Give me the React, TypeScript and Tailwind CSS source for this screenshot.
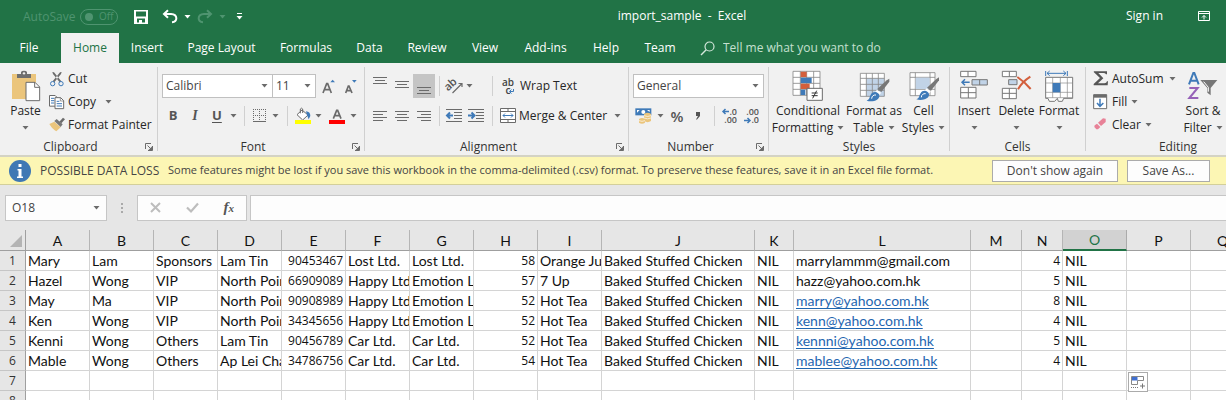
import React from "react";

const INK = "#6b6b6b";
const BLUE = "#3f7ab8";

type DrawProps = { vb: string; className: string; children: React.ReactNode };
const Draw = ({ vb, className, children }: DrawProps) => (
  <svg viewBox={vb} className={"shrink-0 overflow-visible " + className} fill="none" aria-hidden="true">
    {children}
  </svg>
);

const Caret = ({ className = "text-[#6b6b6b]" }: { className?: string }) => (
  <svg viewBox="0 0 7 4" className={"h-1 w-[7px] shrink-0 " + className} aria-hidden="true">
    <path d="M.5 0h6L3.500 3.500z" fill="currentColor" />
  </svg>
);

const Launcher = () => (
  <button aria-label="More options" className="flex h-4 w-4 items-center justify-end pr-1">
    <Draw vb="0 0 8 8" className="h-2 w-2">
      <path d="M.5 6V.5H6" stroke={INK} />
      <path d="M2.500 2.500L6 6" stroke={INK} />
      <path d="M7.500 3v4.500H3" stroke={INK} />
      <path d="M7 3.500V7H3.500z" fill={INK} />
    </Draw>
  </button>
);

type GroupProps = { label: string; className: string; launcher?: boolean; children: React.ReactNode };
const Group = ({ label, className, launcher, children }: GroupProps) => (
  <section aria-label={label} className={"flex shrink-0 flex-col pt-1 " + className}>
    <div className="flex h-[72px]">{children}</div>
    <div className="flex h-4 items-center">
      <span className="flex-1 text-center leading-4 text-[#333]">{label}</span>
      {launcher && <Launcher />}
    </div>
  </section>
);

const Divider = () => <span className="my-1 w-px shrink-0 bg-[#d0d0d0]" />;
const Bar = ({ className = "" }: { className?: string }) => <span className={"h-5 w-px shrink-0 bg-[#d0d0d0] " + className} />;

type IconButtonProps = { label: string; className: string; children: React.ReactNode };
const IconButton = ({ label, className, children }: IconButtonProps) => (
  <button aria-label={label} className={"flex h-6 shrink-0 items-center " + className}>
    {children}
  </button>
);

type BigProps = { icon: React.ReactNode; first: string; second?: string; className: string };
const BigButton = ({ icon, first, second, className }: BigProps) => (
  <button className={"flex shrink-0 flex-col items-center gap-px pt-[3px] leading-4 " + className}>
    <span className="flex h-8 items-center">{icon}</span>
    <span className="whitespace-nowrap">{first}</span>
    <span className="flex h-4 items-center gap-1 whitespace-nowrap">
      {second}
      <Caret />
    </span>
  </button>
);

const PasteIcon = () => (
  <Draw vb="36 24 90 96" className="h-8 w-[30px]">
    <rect x="39" y="36" width="72" height="75" fill="#ebc57c" />
    <path d="M54 48V36h12v-6q2-4 9-4t9 4v6h12v12z" fill="#6f6f6f" />
    <circle cx="75" cy="34" r="3.500" fill="#f1f1f1" />
    <path d="M81 61h27l14 14v41H81z" fill="#fff" stroke={INK} strokeWidth="3" />
    <path d="M107 61v15h15" stroke={INK} strokeWidth="3" />
  </Draw>
);
const CutIcon = () => (
  <Draw vb="147 21 48 48" className="h-4 w-4">
    <path d="M157 24l5 1 22 27-5 3-20-25zM185 24l-5 1-22 27 5 3 20-25z" fill={INK} />
    <circle cx="158" cy="59" r="6.500" stroke={BLUE} strokeWidth="3" />
    <circle cx="183" cy="59" r="6.500" stroke={BLUE} strokeWidth="3" />
  </Draw>
);
const CopyIcon = () => (
  <Draw vb="147 90 48 48" className="h-4 w-4">
    <path d="M148.500 94.500h17l6 6v26h-23z" fill="#fff" stroke={INK} strokeWidth="3" />
    <path d="M153 103h10M153 110h10M153 117h10" stroke={BLUE} strokeWidth="3" />
    <path d="M165 101h17l9 9v24h-26z" fill="#fff" stroke={INK} strokeWidth="3" />
    <path d="M181 101v10h10" stroke={INK} strokeWidth="2" />
    <path d="M170 112h8M170 119h16M170 126h16" stroke={BLUE} strokeWidth="3" />
  </Draw>
);
const PainterIcon = () => (
  <Draw vb="147 160 48 48" className="h-4 w-4">
    <path d="M148 181l15-7 19 17-13 12q-12-6-21-22z" fill="#ebc57c" />
    <path d="M163 172l7-6 18 16-6 8z" fill="#777" />
    <path d="M178 174l11-12 6 5-11 12z" fill={INK} />
  </Draw>
);

const Brush = ({ x, y }: { x: number; y: number }) => (
  <g transform={`translate(${x} ${y})`}>
    <path d="M68 0v9L44 40l-12-9L60 5z" fill="#777" />
    <path d="M31 33l12 9-4 6-13-9z" fill="#fff" />
    <path d="M0 66c10-3 8-12 13-19 4-7 14-9 20-4 8 5 6 15-2 20-8 5-20 6-31 3z" fill={BLUE} />
    <path d="M15 60c0-8 6-12 13-11" stroke="#fff" strokeWidth="3" />
  </g>
);

const ConditionalIcon = () => (
  <Draw vb="163 24 96 96" className="h-8 w-8">
    <path d="M166 28h81v72h-81z" fill="#fff" />
    <path d="M166 28h81v72h-81zM166 46h81M166 64h81M166 82h81M188 28v72M207 28v72M228 28v72" stroke="#888" strokeWidth="2.500" />
    <path d="M189 29h18v16h-18zM189 65h27v16h-27z" fill="#d35f3c" />
    <path d="M189 47h33v16h-33zM189 83h14v16h-14z" fill={BLUE} />
    <path d="M208 79h46v36h-46z" fill="#fff" stroke={INK} strokeWidth="3" />
    <path d="M222 93h18M222 101h18M237 86l-12 23" stroke="#333" strokeWidth="3" />
  </Draw>
);
const TableIcon = () => (
  <Draw vb="354 24 96 96" className="h-8 w-8">
    <path d="M361 34h72v69h-72z" fill="#fff" />
    <path d="M379 49h54v54h-54z" fill="#c1d3e7" />
    <path d="M361 34h72v69h-72zM361 49h72M361 67h72M361 85h72M379 34v69M397 34v69M415 34v69" stroke="#888" strokeWidth="2.500" />
    <Brush x={380} y={50} />
  </Draw>
);
const CellStylesIcon = () => (
  <Draw vb="505 21 96 96" className="h-8 w-8">
    <path d="M511 29h75v69h-75z" fill="#fff" />
    <path d="M511 29h75v69h-75zM511 43h75M511 79h75M527 29v69M571 29v69" stroke="#888" strokeWidth="2.500" />
    <path d="M528 44h42v34h-42z" fill="#c1d3e7" />
    <Brush x={530} y={43} />
  </Draw>
);
const InsertIcon = () => (
  <Draw vb="0 0 96 96" className="h-8 w-8">
    <path d="M8 4h46v16H8zM30 4v16M8 52h46v32H8zM31 52v32M8 68h46" fill="#fff" stroke="#777" strokeWidth="3" />
    <path d="M42 29h46v16H42zM65 29v16" fill="#c1d3e7" stroke="#777" strokeWidth="3" />
    <path d="M35 37H13M21 28l-9 9 9 9" stroke={BLUE} strokeWidth="4.500" />
  </Draw>
);
const DeleteIcon = () => (
  <Draw vb="66 24 96 96" className="h-8 w-8">
    <path d="M70 28h42v16H70zM91 28v16M70 79h42v31H70zM91 79v31M70 94h42" fill="#fff" stroke="#777" strokeWidth="3" />
    <path d="M89 53h25v15H89z" fill="#c1d3e7" stroke="#777" strokeWidth="3" />
    <path d="M115 45q20 13 40 36M154 44q-25 16-37 38" stroke="#d35f3c" strokeWidth="6" />
  </Draw>
);
const FormatIcon = () => (
  <Draw vb="189 21 96 96" className="h-8 w-8">
    <path d="M197 24v15M262 24v15M201 31h57M209 24l-8 7 8 7M250 24l8 7-8 7" stroke={BLUE} strokeWidth="3" />
    <path d="M197 43h81v63h-27l-4 9h-12l-3-9-8 9h-16l-4-9h-7z" fill="#fff" stroke="#777" strokeWidth="3" />
    <path d="M197 60h81M197 88h81M197 104h81M218 43v61M241 43v61M262 43v61" stroke="#888" strokeWidth="2" />
    <path d="M218 60h23v28h-23z" fill={BLUE} />
  </Draw>
);
const SortIcon = () => (
  <Draw vb="624 24 90 90" className="h-[30px] w-[30px]">
    <path d="M627 64l13-34h3l13 34M632 53h19" stroke={BLUE} strokeWidth="6" />
    <path d="M628 75h25l-25 30h27" stroke="#9661b8" strokeWidth="6" />
    <path d="M661 51h51l-20 24v22l-10-8V75z" fill="#777" />
    <path d="M671 56l14 17v13" stroke="#fff" strokeWidth="3" />
  </Draw>
);

type Align = "left" | "center" | "right";
const Lines = ({ widths, align }: { widths: number[]; align: Align }) => (
  <Draw vb="0 0 14 12" className="h-3 w-3.5">
    {widths.map((w, i) => {
      const x = align === "left" ? 0 : align === "right" ? 14 - w : (14 - w) / 2;
      return <rect key={i} x={x} y={i * 3 + 1} width={w} height="1" fill={INK} />;
    })}
  </Draw>
);

const Indent = ({ flip }: { flip?: boolean }) => (
  <Draw vb="0 0 16 14" className="h-3.5 w-4">
    <path d="M0 .5h16M8 3.500h8M8 6.500h8M8 9.500h8M0 12.500h16" stroke={INK} />
    {flip ? <path d="M0 6.500h6M3.500 3.500l3 3-3 3" stroke={BLUE} strokeWidth="2" /> : <path d="M7 6.500H1M4 3.500l-3 3 3 3" stroke={BLUE} strokeWidth="2" />}
  </Draw>
);

const DecimalIcon = ({ less }: { less?: boolean }) => (
  <span className="relative flex w-[15px] flex-col items-end text-[9px] leading-[8px] font-semibold">
    <span>{less ? ".00" : ".0"}</span>
    <span>{less ? ".0" : ".00"}</span>
    <Draw vb="0 0 7 5" className={less ? "absolute bottom-px left-0 h-[5px] w-[7px]" : "absolute top-px left-0 h-[5px] w-[7px]"}>
      {less ? <path d="M0 2.500h6M3.500 0L6 2.500 3.500 5" stroke={BLUE} strokeWidth="1.500" /> : <path d="M7 2.500H1M3.500 0L1 2.500 3.500 5" stroke={BLUE} strokeWidth="1.500" />}
    </Draw>
  </span>
);

type PickProps = { label: string; value: string; className: string };
const Pick = ({ label, value, className }: PickProps) => (
  <span className={"relative flex h-6 shrink-0 items-center border border-[#c0c0c0] bg-white " + className}>
    <select aria-label={label} defaultValue={value} className="h-full w-full appearance-none bg-transparent pl-[3px] text-[#444] outline-none">
      <option>{value}</option>
    </select>
    <Caret className="pointer-events-none absolute right-1 text-[#6b6b6b]" />
  </span>
);

const tabs: [string, string][] = [
  ["File", "w-[61px] pr-[3px]"],
  ["Home", "w-[58px] bg-[#f1f1f1] text-[#217346]"],
  ["Insert", "w-[56px]"],
  ["Page Layout", "w-[93px]"],
  ["Formulas", "w-[76px]"],
  ["Data", "w-[51px]"],
  ["Review", "w-[64px]"],
  ["View", "w-[52px]"],
  ["Add-ins", "w-[69px]"],
  ["Help", "w-[52px]"],
  ["Team", "w-[56px]"],
];

const columns: [string, string][] = [
  ["A", "w-16"], ["B", "w-16"], ["C", "w-16"], ["D", "w-16"], ["E", "w-16"], ["F", "w-16"], ["G", "w-16"], ["H", "w-16"], ["I", "w-16"],
  ["J", "w-[153px]"], ["K", "w-[39px]"], ["L", "w-[177px]"], ["M", "w-[51px]"], ["N", "w-[41px]"], ["O", "w-16"], ["P", "w-16"], ["Q", "w-16"],
];

const dish = "Baked Stuffed Chicken";
const rows: string[][] = [
  ["Mary", "Lam", "Sponsors", "Lam Tin", "90453467", "Lost Ltd.", "Lost Ltd.", "58", "Orange Juice", dish, "NIL", "marrylammm@gmail.com", "", "4", "NIL"],
  ["Hazel", "Wong", "VIP", "North Point", "66909089", "Happy Ltd.", "Emotion Ltd.", "57", "7 Up", dish, "NIL", "hazz@yahoo.com.hk", "", "5", "NIL"],
  ["May", "Ma", "VIP", "North Point", "90908989", "Happy Ltd.", "Emotion Ltd.", "52", "Hot Tea", dish, "NIL", "marry@yahoo.com.hk", "", "8", "NIL"],
  ["Ken", "Wong", "VIP", "North Point", "34345656", "Happy Ltd.", "Emotion Ltd.", "52", "Hot Tea", dish, "NIL", "kenn@yahoo.com.hk", "", "4", "NIL"],
  ["Kenni", "Wong", "Others", "Lam Tin", "90456789", "Car Ltd.", "Car Ltd.", "52", "Hot Tea", dish, "NIL", "kennni@yahoo.com.hk", "", "5", "NIL"],
  ["Mable", "Wong", "Others", "Ap Lei Chau", "34786756", "Car Ltd.", "Car Ltd.", "54", "Hot Tea", dish, "NIL", "mablee@yahoo.com.hk", "", "4", "NIL"],
  [],
  [],
];
const numeric = new Set(["E", "H", "N"]);

const TitleBar = () => (
  <header className="flex h-[33px] items-center text-white">
    <div className="flex w-[250px] shrink-0 items-center">
      <span className="w-20 shrink-0 pl-[23px] text-[#4f9470]">AutoSave</span>
      <button className="flex h-4 w-[38px] shrink-0 items-center gap-1.5 rounded-full border border-[#4f9470] pl-1 text-[10px] text-[#4f9470]">
        <span className="h-2 w-2 rounded-full bg-[#4f9470]" />
        Off
      </button>
      <button aria-label="Save" className="ml-4">
        <Draw vb="0 0 14 14" className="h-3.5 w-3.5">
          <path d="M0 0h14v14H0zM2 1.500V6.500h10V1.500zM3 8.500V12.500h2V10h3v2.500h3V8.500z" fill="#fff" fillRule="evenodd" />
        </Draw>
      </button>
      <button aria-label="Undo" className="ml-3.5 flex items-center gap-1.5">
        <Draw vb="486 24 48 48" className="h-4 w-4">
          <path d="M504 28l-12 11 12 11M493 39h20q16 1 16 13 0 11-13 12" stroke="#fff" strokeWidth="6" />
        </Draw>
        <Caret className="text-white" />
      </button>
      <button aria-label="Redo" className="ml-1.5 flex items-center gap-1.5">
        <Draw vb="591 24 48 48" className="h-4 w-4">
          <path d="M621 28l12 11-12 11M632 39h-20q-16 1-16 13 0 11 13 12" stroke="#4f9470" strokeWidth="6" />
        </Draw>
        <Caret className="text-[#4f9470]" />
      </button>
      <button aria-label="Customize toolbar" className="ml-2.5 flex flex-col items-center gap-0.5">
        <span className="h-px w-[5px] bg-white" />
        <Caret className="text-white" />
      </button>
    </div>
    <h1 className="flex-1 pb-0.5 text-center whitespace-pre">import_sample  -  Excel</h1>
    <div className="flex w-28 shrink-0 items-center justify-between pr-4 pb-0.5 pl-3">
      <button>Sign in</button>
      <button aria-label="Ribbon display options">
        <Draw vb="0 0 12 10" className="h-2.5 w-3">
          <path d="M.5.5h11v9H.5zM.5 2.500h11M6 8.500V4.500M4 6.500l2-2 2 2" stroke="#fff" />
        </Draw>
      </button>
    </div>
  </header>
);

const TabRow = () => (
  <nav className="flex h-[30px] text-white">
    {tabs.map(([name, cls]) => (
      <button key={name} className={"shrink-0 whitespace-nowrap " + cls}>
        {name}
      </button>
    ))}
    <label className="flex items-center gap-2 pl-3 text-[#c5e0d0]">
      <Draw vb="0 0 15 15" className="h-[15px] w-[15px]">
        <circle cx="9.500" cy="5.500" r="4.500" stroke="#d5e8dc" strokeWidth="1.200" />
        <path d="M6.200 8.800L1 14" stroke="#d5e8dc" strokeWidth="1.400" />
      </Draw>
      <input className="w-48 bg-transparent text-[#c5e0d0] outline-none placeholder:text-[#c5e0d0]" placeholder="Tell me what you want to do" />
    </label>
  </nav>
);

const Ribbon = () => (
  <div className="flex h-[92px] shrink-0 overflow-hidden bg-[#f1f1f1]">
    <Group label="Clipboard" launcher className="w-[157px]">
      <BigButton className="w-[49px] pl-0.5" icon={<PasteIcon />} first="Paste" />
      <div className="flex flex-col">
        <button className="flex h-[23px] items-center gap-[3px]"><CutIcon />Cut</button>
        <button className="flex h-[23px] items-center gap-[3px]"><CopyIcon />Copy<span className="pl-1.5"><Caret /></span></button>
        <button className="flex h-[23px] items-center gap-[3px] whitespace-nowrap"><PainterIcon />Format Painter</button>
      </div>
    </Group>
    <Divider />
    <Group label="Font" launcher className="w-[206px]">
      <div className="flex flex-col gap-1.5 pt-[7px] pl-1">
        <div className="flex items-center">
          <Pick label="Font" value="Calibri" className="w-[111px]" />
          <Pick label="Font size" value="11" className="-ml-px w-11" />
          <IconButton label="Increase font size" className="ml-1.5 w-[22px]">
            <Draw vb="246 42 42 48" className="h-4 w-3.5">
              <path d="M249 87l11-28h3l11 28M253 77h17" stroke={INK} strokeWidth="5" />
              <path d="M271 55l7-8 7 8z" fill={BLUE} />
            </Draw>
          </IconButton>
          <IconButton label="Decrease font size" className="w-[18px]">
            <Draw vb="313 42 42 48" className="h-4 w-3.5">
              <path d="M318 87l8-21h2l9 21M321 80h13" stroke={INK} strokeWidth="5" />
              <path d="M337 48h14l-7 8z" fill={BLUE} />
            </Draw>
          </IconButton>
        </div>
        <div className="flex items-center text-[13px] text-[#555]">
          <IconButton label="Bold" className="w-[22px] justify-center"><b>B</b></IconButton>
          <IconButton label="Italic" className="w-[22px] justify-center"><i className="font-['Liberation_Serif',serif] text-sm font-bold">I</i></IconButton>
          <IconButton label="Underline" className="w-[38px] justify-between pr-[7px] pl-1.5"><b className="underline underline-offset-2">U</b><Caret /></IconButton>
          <Bar />
          <IconButton label="Borders" className="w-[42px] justify-between px-2">
            <Draw vb="0 0 13 14" className="h-3.5 w-[13px]">
              <path d="M0 .5h13M0 6.500h13M.5 0v12M6.500 0v12M12.500 0v12" stroke={INK} strokeDasharray="1 1" />
              <path d="M0 12.500h13" stroke={INK} />
            </Draw>
            <Caret />
          </IconButton>
          <Bar />
          <IconButton label="Fill color" className="w-[38px] justify-between pr-1 pl-1.5">
            <Draw vb="163 135 51 54" className="h-[18px] w-[17px]">
              <path d="M172 158l15-14 18 15-16 15z" fill="#fff" stroke={INK} strokeWidth="3" />
              <path d="M182 154v-13q3-5 7 0v12" stroke={INK} strokeWidth="3" />
              <path d="M199 148q13 1 13 14l-5 10-5-13z" fill={BLUE} />
              <path d="M166 174h48v12h-48z" fill="#ff0" />
            </Draw>
            <Caret />
          </IconButton>
          <IconButton label="Font color" className="w-[31px] justify-between pl-[3px]">
            <Draw vb="267 135 48 54" className="h-[18px] w-4">
              <path d="M280 170l10-25h3l10 25M284 161h15" stroke={INK} strokeWidth="5" />
              <path d="M267 174h48v12h-48z" fill="#f00" />
            </Draw>
            <Caret />
          </IconButton>
        </div>
      </div>
    </Group>
    <Divider />
    <Group label="Alignment" launcher className="w-[263px]">
      <div className="flex flex-col gap-1.5 pt-[7px] pl-1">
        <div className="flex items-center">
          <IconButton label="Top align" className="w-[22px] items-start justify-center pt-0.5"><Lines widths={[14, 10, 14]} align="center" /></IconButton>
          <IconButton label="Middle align" className="w-[22px] justify-center"><Lines widths={[14, 10, 14]} align="center" /></IconButton>
          <IconButton label="Bottom align" className="w-[22px] items-end justify-center bg-[#c5c5c5]"><Lines widths={[14, 10, 14]} align="center" /></IconButton>
          <Bar className="ml-1" />
          <IconButton label="Orientation" className="w-[41px] justify-between pr-2 pl-1.5">
            <Draw vb="0 0 18 16" className="h-4 w-[18px]">
              <text x="-1" y="10" fill="#555" fontFamily="Open Sans, sans-serif" fontSize="11" fontWeight="600" transform="rotate(-42 5 8)">ab</text>
              <path d="M6.500 15L16 5.500M12.500 5.500H16V9" stroke={INK} strokeWidth="1.200" />
            </Draw>
            <Caret />
          </IconButton>
          <Bar className="mr-[9px] ml-[11px]" />
          <button className="flex h-6 items-center gap-1.5 whitespace-nowrap">
            <span className="relative flex w-3 flex-col text-[10px] leading-[8px] font-semibold text-[#444]">
              <span>ab</span>
              <span>c</span>
              <Draw vb="0 0 5 5" className="absolute right-0 bottom-0 h-[5px] w-[5px]">
                <path d="M4.500 0v2.500H1M2.500 .5l-2 2 2 2" stroke={BLUE} />
              </Draw>
            </span>
            Wrap Text
          </button>
        </div>
        <div className="flex items-center">
          <IconButton label="Align left" className="w-[22px] justify-center"><Lines widths={[14, 10, 14, 10]} align="left" /></IconButton>
          <IconButton label="Center" className="w-[22px] justify-center"><Lines widths={[14, 10, 14, 10]} align="center" /></IconButton>
          <IconButton label="Align right" className="w-[22px] justify-center"><Lines widths={[14, 10, 14, 10]} align="right" /></IconButton>
          <Bar className="ml-1" />
          <IconButton label="Decrease indent" className="w-[22px] justify-end"><Indent /></IconButton>
          <IconButton label="Increase indent" className="w-[22px] justify-end"><Indent flip /></IconButton>
          <Bar className="mr-[7px] ml-2" />
          <button className="flex h-6 items-center gap-[3px] whitespace-nowrap">
            <Draw vb="0 0 16 16" className="h-4 w-4">
              <path d="M.5.5h15v14H.5zM.5 3.500h15M.5 11.500h15M8 0v3.500M8 11.500V15" fill="#fff" stroke={INK} />
              <path d="M3 7.500h10M5 5.500l-2 2 2 2M11 5.500l2 2-2 2" stroke={BLUE} />
            </Draw>
            Merge &amp; Center
            <span className="pl-1"><Caret /></span>
          </button>
        </div>
      </div>
    </Group>
    <Divider />
    <Group label="Number" launcher className="w-[139px]">
      <div className="flex flex-col gap-1.5 pt-[7px] pl-1">
        <Pick label="Number format" value="General" className="w-[131px]" />
        <div className="flex items-center text-[#555]">
          <IconButton label="Accounting format" className="w-[33px] justify-between pr-0.5 pl-0.5">
            <Draw vb="437 135 51 54" className="h-[18px] w-[17px]">
              <path d="M438 139h48v21h-48z" fill={BLUE} />
              <path d="M443 144h8l-8 8zM481 144h-8l8 6z" fill="#fff" />
              <circle cx="462" cy="150" r="6" fill="#fff" />
              <path d="M464 156q11-7 21 0v21q-10 7-21 0z" fill="#ebc57c" />
              <path d="M449 171q9-6 18 0v11q-9 6-18 0z" fill="#ebc57c" />
              <path d="M464 161q11 5 21 0M464 168q11 5 21 0M449 176q9 4 18 0" stroke="#fff" strokeWidth="2" />
            </Draw>
            <Caret />
          </IconButton>
          <IconButton label="Percent" className="w-[22px] justify-center text-[15px] font-semibold">%</IconButton>
          <IconButton label="Comma style" className="w-5 justify-center">
            <Draw vb="0 0 6 8" className="h-2 w-1.5"><path d="M1 0h4v4L2 7.500H1L3 4H1z" fill="#555" /></Draw>
          </IconButton>
          <Bar className="ml-1.5" />
          <IconButton label="Increase decimal" className="w-[22px] justify-end"><DecimalIcon /></IconButton>
          <IconButton label="Decrease decimal" className="w-[22px] justify-end"><DecimalIcon less /></IconButton>
        </div>
      </div>
    </Group>
    <Divider />
    <Group label="Styles" className="w-[180px]">
      <BigButton className="w-[78px]" icon={<ConditionalIcon />} first="Conditional" second="Formatting" />
      <BigButton className="w-[54px]" icon={<TableIcon />} first="Format as" second="Table" />
      <BigButton className="w-[45px]" icon={<CellStylesIcon />} first="Cell" second="Styles" />
    </Group>
    <Divider />
    <Group label="Cells" className="w-[135px]">
      <BigButton className="ml-1 w-10" icon={<InsertIcon />} first="Insert" />
      <BigButton className="w-[45px]" icon={<DeleteIcon />} first="Delete" />
      <BigButton className="w-10" icon={<FormatIcon />} first="Format" />
    </Group>
    <Divider />
    <Group label="Editing" className="w-[184px]">
      <div className="flex w-[93px] shrink-0 flex-col pl-[7px]">
        <button className="flex h-[23px] items-center gap-[3px] whitespace-nowrap">
          <Draw vb="339 24 48 45" className="h-[15px] w-4"><path d="M342 25h39v9h-3q-2-4-8-4h-15l15 16-16 15h19q7 0 8-6h3l-1 12h-42v-4l19-18-19-18z" fill="#555" /></Draw>
          AutoSum<span className="pl-0.5"><Caret /></span>
        </button>
        <button className="flex h-[23px] items-center gap-1">
          <Draw vb="341 90 45 48" className="h-4 w-[15px]">
            <path d="M343 92h39v42h-39z" fill="#fff" stroke={INK} strokeWidth="3" />
            <path d="M343 92h39v9h-39z" fill={INK} />
            <path d="M362 104v22M353 117l9 10 10-10" stroke={BLUE} strokeWidth="4.500" />
          </Draw>
          Fill<Caret />
        </button>
        <button className="flex h-[23px] items-center gap-1">
          <Draw vb="341 159 45 48" className="h-4 w-[15px]">
            <path d="M356 176l15-13 8 1v10l-14 12z" fill="#e88298" />
            <path d="M353 179l10 10-7 7h-5l-6-7 1-5z" fill="#e88298" />
          </Draw>
          Clear<Caret />
        </button>
      </div>
      <BigButton className="w-12" icon={<SortIcon />} first="Sort &amp;" second="Filter" />
    </Group>
  </div>
);

const MessageBar = () => (
  <div role="status" className="flex h-[30px] shrink-0 items-center border-t-2 border-b border-t-[#d4d3c4] border-b-[#d3cf9a] bg-[#fcf6b4] pl-[9px] text-[#444]">
    <Draw vb="0 0 22 22" className="h-[22px] w-[22px]">
      <circle cx="11" cy="11" r="11" fill="#3f78b4" />
      <path d="M9.500 4h3v3h-3zM8.500 9h4v7.500h1.500V18h-6v-1.500h1.500v-6H8.500z" fill="#fff" />
    </Draw>
    <span className="ml-[9px] w-32 shrink-0 whitespace-nowrap">POSSIBLE DATA LOSS</span>
    <span className="min-w-0 flex-1 text-[11px] whitespace-nowrap">
      Some features might be lost if you save this workbook in the comma-delimited (.csv) format. To preserve these features, save it in an Excel file format.
    </span>
    <button className="h-[22px] w-[126px] shrink-0 border border-[#ababab] bg-[#fdfdfd]">Don't show again</button>
    <button className="mr-4 ml-[9px] h-[22px] w-[83px] shrink-0 border border-[#ababab] bg-[#fdfdfd]">Save As...</button>
  </div>
);

const FormulaBar = () => (
  <div className="flex h-[45px] shrink-0 items-center bg-[#e6e6e6] pl-[5px]">
    <label className="flex h-[26px] w-[102px] shrink-0 items-center border border-[#c6c6c6] bg-[#fdfdfd] pr-1.5 pl-1.5">
      <input aria-label="Name box" defaultValue="O18" className="min-w-0 flex-1 bg-transparent text-[#444] outline-none" />
      <Caret />
    </label>
    <Draw vb="0 0 2 10" className="mx-3.5 h-2.5 w-0.5">
      <path d="M0 0h2v2H0zM0 4h2v2H0zM0 8h2v2H0z" fill="#aaa" />
    </Draw>
    <div className="flex h-[26px] w-[110px] shrink-0 items-center justify-between border border-[#c6c6c6] bg-[#fdfdfd] px-3">
      <button aria-label="Cancel"><Draw vb="0 0 11 11" className="h-[11px] w-[11px]"><path d="M1 1l9 9M10 1l-9 9" stroke="#bdbdbd" strokeWidth="2" /></Draw></button>
      <button aria-label="Enter"><Draw vb="0 0 13 11" className="h-[11px] w-[13px]"><path d="M1 5.500L5 9.500 12 1.500" stroke="#bdbdbd" strokeWidth="2.200" /></Draw></button>
      <button className="font-['Liberation_Serif',serif] text-[15px] leading-4 font-bold text-[#555] italic">f<span className="text-[11px]">x</span></button>
    </div>
    <input aria-label="Formula" className="ml-[3px] h-[26px] min-w-0 flex-1 border border-r-0 border-[#c6c6c6] bg-[#fdfdfd] outline-none" />
  </div>
);

const Sheet = () => (
  <main className="min-h-0 flex-1 overflow-hidden bg-white">
    <table className="w-[1255px] table-fixed border-separate border-spacing-0 font-[Lato,sans-serif] text-[14px] leading-[19px] text-[#111]">
      <colgroup>
        <col className="w-[26px]" />
        {columns.map(([name, w]) => <col key={name} className={w} />)}
      </colgroup>
      <thead>
        <tr className="h-[21px] bg-[#e6e6e6]">
          <th aria-label="Select all" className="border-r border-b border-[#9f9f9f] p-0">
            <Draw vb="0 0 25 20" className="h-5 w-[25px]"><path d="M22 5v12H10z" fill="#b4b4b4" /></Draw>
          </th>
          {columns.map(([name]) => (
            <th
              key={name}
              scope="col"
              className={
                name === "O"
                  ? "border-r border-b-2 border-r-[#ababab] border-b-[#217346] bg-[#d2d2d2] p-0 font-normal text-[#217346]"
                  : "border-r border-b border-r-[#b5b5b5] border-b-[#9f9f9f] p-0 font-normal"
              }
            >
              {name}
            </th>
          ))}
        </tr>
      </thead>
      <tbody>
        {rows.map((row, r) => (
          <tr key={r} className="h-5">
            <th scope="row" className="border-r border-b border-r-[#9f9f9f] border-b-[#c6c6c6] bg-[#e6e6e6] p-0 font-['Open_Sans',sans-serif] text-[12px] font-normal text-[#333]">{r + 1}</th>
            {columns.map(([name], c) => (
              <td
                key={name}
                className={
                  name === "P" && r === 6
                    ? "relative border-r border-b border-[#d4d4d4] p-0"
                    : "overflow-hidden border-r border-b border-[#d4d4d4] px-0.5 py-0 whitespace-nowrap " + (numeric.has(name) ? "text-right font-['Open_Sans',sans-serif] text-[12px]" : "")
                }
              >
                {name === "L" && r > 1 && row[c] ? (
                  <a href={"mailto:" + row[c]} className="text-[#1f66b0] underline underline-offset-2">{row[c]}</a>
                ) : (
                  row[c]
                )}
                {name === "P" && r === 6 && (
                  <button aria-label="Auto fill options" className="absolute top-px left-px flex h-5 w-5 items-center justify-center border border-[#ababab] bg-white">
                    <Draw vb="0 0 14 14" className="h-3.5 w-3.5">
                      <path d="M.5 1.500h12v4H6.500v4H.5z" fill="#fff" stroke="#888" />
                      <path d="M1 2h5.500v3.500H1z" fill="#3f6fd0" />
                      <path d="M0 12.500h8" stroke="#777" strokeDasharray="1 1" />
                      <path d="M9 11h5M11.500 8.500v5" stroke="#777" />
                    </Draw>
                  </button>
                )}
              </td>
            ))}
          </tr>
        ))}
      </tbody>
    </table>
  </main>
);

export default function App() {
  return (
    <div className="flex h-screen flex-col overflow-hidden bg-[#e6e6e6] font-['Open_Sans','Noto_Sans',sans-serif] text-[12px] text-[#262626]">
      <div className="shrink-0 bg-[#217346]">
        <TitleBar />
        <TabRow />
      </div>
      <Ribbon />
      <MessageBar />
      <FormulaBar />
      <Sheet />
    </div>
  );
}
